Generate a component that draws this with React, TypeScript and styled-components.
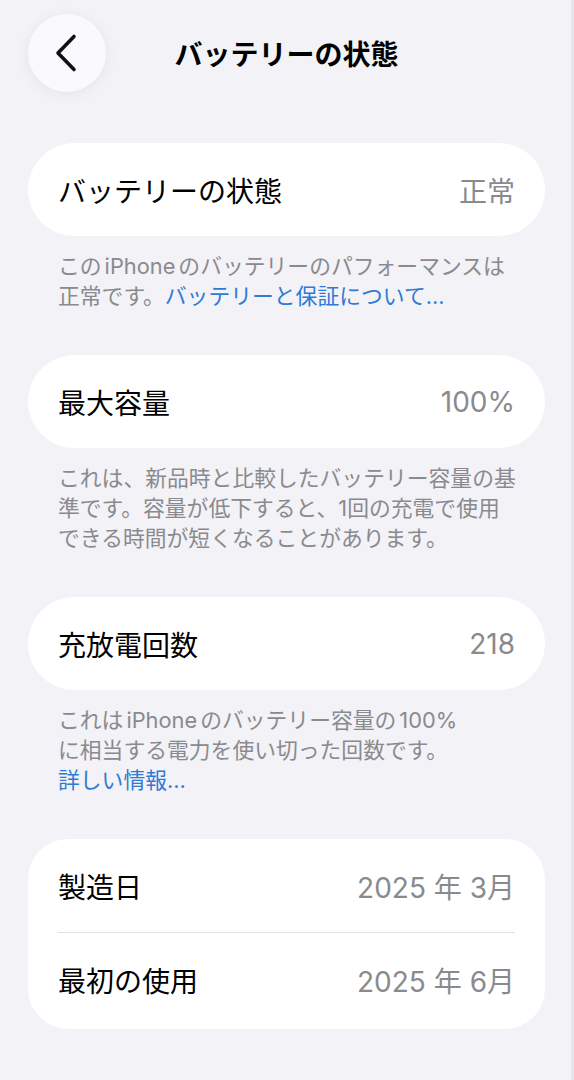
import styled, { createGlobalStyle } from "styled-components";

const GlobalStyle = createGlobalStyle`
  html, body {
    margin: 0;
    padding: 0;
    background: #f2f2f7;
  }
  body {
    font-family: "Inter", "Noto Sans CJK JP", sans-serif;
    -webkit-font-smoothing: antialiased;
  }
`;

const Page = styled.div`
  min-height: 1080px;
  box-sizing: border-box;
  padding: 14px 26px 40px 28px;
  background: #f2f2f7;
  border-right: 3px solid #e6e6ec;
`;

const Header = styled.header`
  display: grid;
  grid-template-columns: 78px 1fr 78px;
  align-items: center;
  margin-bottom: 51px;
`;

const BackButton = styled.button`
  width: 78px;
  height: 78px;
  border: none;
  border-radius: 50%;
  background: #fafafc;
  box-shadow: 0 2px 14px rgba(0, 0, 0, 0.06);
  display: flex;
  align-items: center;
  justify-content: center;
  padding: 0;
  cursor: pointer;
`;

const Title = styled.h1`
  margin: 0;
  text-align: center;
  font-size: 28px;
  font-weight: 700;
  color: #000;
`;

const Card = styled.section<{ $multi?: boolean }>`
  background: #fff;
  border-radius: ${(p) => (p.$multi ? "40px" : "47px")};
  padding: 0 30px ${(p) => (p.$multi ? "3px" : "0")};
`;

const Row = styled.div`
  display: flex;
  align-items: center;
  justify-content: space-between;
  height: 93px;

  & + & {
    border-top: 1.5px solid #e2e2e6;
  }
`;

const Label = styled.span`
  font-size: 28px;
  color: #000;
`;

const Value = styled.span`
  font-size: 28px;
  color: #8a8a8e;
`;

const Footnote = styled.p`
  margin: 15px 0 44px;
  padding: 0 0 0 30px;
  font-size: 21.8px;
  line-height: 30px;
  color: #8a8a8e;
  white-space: nowrap;
`;

const Latin = styled.span`
  margin: 0 3px;
`;

const Link = styled.a`
  color: #2f7ad6;
  text-decoration: none;
`;

const Chevron = () => (
  <svg width="26" height="40" viewBox="0 0 26 40" fill="none">
    <path
      d="M20 3.5 L4 20 L20 36.5"
      stroke="#111"
      strokeWidth="3.6"
      strokeLinecap="round"
      strokeLinejoin="round"
    />
  </svg>
);

export default function App() {
  return (
    <>
      <GlobalStyle />
      <Page>
        <Header>
          <BackButton aria-label="戻る">
            <Chevron />
          </BackButton>
          <Title>バッテリーの状態</Title>
          <span />
        </Header>

        <Card>
          <Row>
            <Label>バッテリーの状態</Label>
            <Value>正常</Value>
          </Row>
        </Card>
        <Footnote>
          この<Latin>iPhone</Latin>のバッテリーのパフォーマンスは
          <br />
          正常です。<Link href="#">バッテリーと保証について...</Link>
        </Footnote>

        <Card>
          <Row>
            <Label>最大容量</Label>
            <Value>100%</Value>
          </Row>
        </Card>
        <Footnote>
          これは、新品時と比較したバッテリー容量の基
          <br />
          準です。容量が低下すると、1回の充電で使用
          <br />
          できる時間が短くなることがあります。
        </Footnote>

        <Card>
          <Row>
            <Label>充放電回数</Label>
            <Value>218</Value>
          </Row>
        </Card>
        <Footnote>
          これは<Latin>iPhone</Latin>のバッテリー容量の<Latin>100%</Latin>
          <br />
          に相当する電力を使い切った回数です。
          <br />
          <Link href="#">詳しい情報...</Link>
        </Footnote>

        <Card $multi>
          <Row>
            <Label>製造日</Label>
            <Value>2025 年 3月</Value>
          </Row>
          <Row>
            <Label>最初の使用</Label>
            <Value>2025 年 6月</Value>
          </Row>
        </Card>
      </Page>
    </>
  );
}
